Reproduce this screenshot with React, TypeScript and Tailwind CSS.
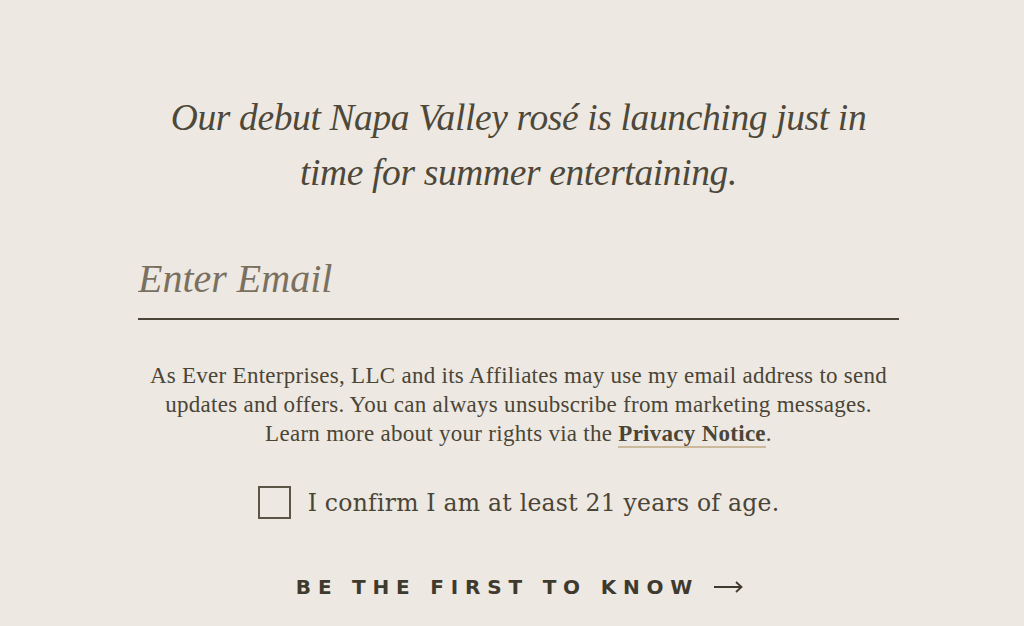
export default function App() {
  return (
    <div className="min-h-[626px] w-full bg-[#ede8e2] text-[#4a4536] overflow-hidden">
      <div className="ml-[138px] w-[761px] pt-[90px] flex flex-col items-center">
        <h2
          className="text-center italic text-[37.5px] leading-[55px] w-[730px] tracking-[-0.01em] text-[#4d4839]"
          style={{ fontFamily: '"Liberation Serif", serif' }}
        >
          Our debut Napa Valley rosé is launching just in time for summer entertaining.
        </h2>

        <div className="w-full mt-[54px] border-b-2 border-[#4a4536] pb-[14px]">
          <input
            type="email"
            placeholder="Enter Email"
            className="w-full bg-transparent outline-none italic text-[40px] leading-[50px] text-[#4a4536] placeholder:text-[#7a7060]"
            style={{ fontFamily: '"Liberation Serif", serif' }}
          />
        </div>

        <p
          className="mt-[41px] text-center text-[23px] leading-[29px] w-[760px] text-[#4a4536] tracking-[0.012em]"
          style={{ fontFamily: '"Liberation Serif", serif' }}
        >
          As Ever Enterprises, LLC and its Affiliates may use my email address to send
          <br />
          updates and offers. You can always unsubscribe from marketing messages.
          <br />
          Learn more about your rights via the{" "}
          <a href="#" className="font-bold border-b-2 border-[#cbb99c]">
            Privacy Notice
          </a>
          .
        </p>

        <label className="mt-[38px] flex items-center gap-[17px] cursor-pointer">
          <span className="w-[33px] h-[33px] border-2 border-[#5a5545] block" />
          <span
            className="text-[23.5px] leading-[32px] text-[#4a4536] tracking-[0.01em]"
            style={{ fontFamily: '"DejaVu Serif", serif' }}
          >
            I confirm I am at least 21 years of age.
          </span>
        </label>

        {/* CTA */}
        <button
          className="mt-[53px] ml-[2px] flex items-center gap-[15px] text-[20px] font-bold tracking-[0.34em] uppercase text-[#3f3a2e]"
          style={{ fontFamily: '"DejaVu Sans", sans-serif' }}
        >
          Be the first to know
          <svg width="29" height="12" viewBox="0 0 29 12" fill="none" stroke="currentColor" strokeWidth="1.8">
            <path d="M0 6h27.5M22 1l5.5 5-5.5 5" />
          </svg>
        </button>
      </div>
    </div>
  );
}
